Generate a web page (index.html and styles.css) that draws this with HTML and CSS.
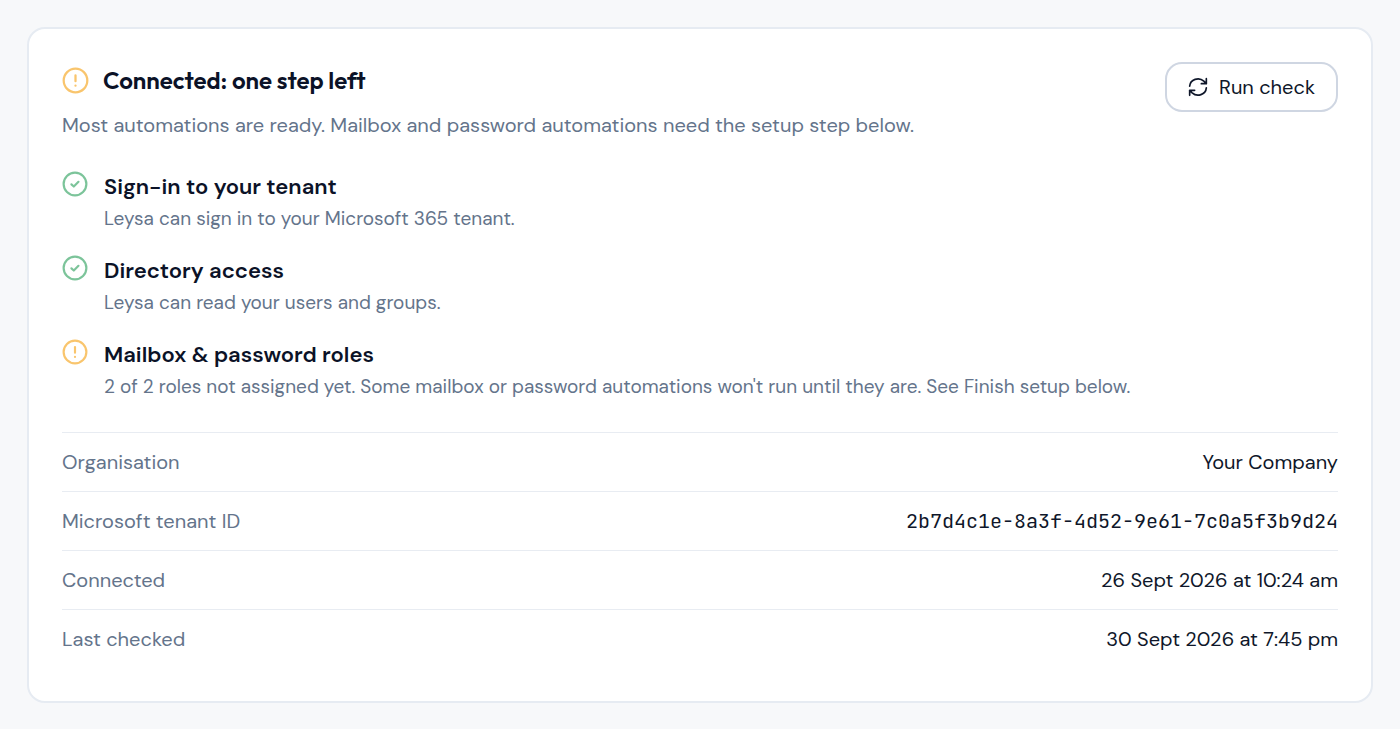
FILE: index.html
```html
<!DOCTYPE html>
<html lang="en">
<head>
<meta charset="utf-8">
<meta name="viewport" content="width=device-width, initial-scale=1">
<title>Connection status</title>
<link rel="stylesheet" href="styles.css">
</head>
<body>
<main class="card">
  <header class="card-header">
    <div class="intro">
      <div class="title-row">
        <svg class="icon icon-title warn" viewBox="0 0 24 24" aria-hidden="true"><circle cx="12" cy="12" r="10.5"/><path d="M12 7.4v5.2M12 16.5v.1"/></svg>
        <h1 class="title">Connected: one step left</h1>
      </div>
      <p class="summary">Most automations are ready. Mailbox and password automations need the setup step below.</p>
    </div>
    <button class="run-button" type="button">
      <svg class="icon icon-button" viewBox="0 0 24 24" aria-hidden="true"><path d="M2 11a10 9.5 0 0 1 17-6l3 3M22 2v6h-6M22 13a10 9.5 0 0 1-17 6l-3-3M2 22v-6h6"/></svg>
      Run check
    </button>
  </header>
  <ul class="checks">
    <li class="check">
      <svg class="icon icon-check ok" viewBox="0 0 24 24" aria-hidden="true"><circle cx="12" cy="12" r="10.5"/><path d="M8.7 12.3l2.2 2 4.3-4.3"/></svg>
      <div>
        <h2 class="check-title">Sign-in to your tenant</h2>
        <p class="check-text">Leysa can sign in to your Microsoft 365 tenant.</p>
      </div>
    </li>
    <li class="check">
      <svg class="icon icon-check ok" viewBox="0 0 24 24" aria-hidden="true"><circle cx="12" cy="12" r="10.5"/><path d="M8.7 12.3l2.2 2 4.3-4.3"/></svg>
      <div>
        <h2 class="check-title">Directory access</h2>
        <p class="check-text">Leysa can read your users and groups.</p>
      </div>
    </li>
    <li class="check">
      <svg class="icon icon-check warn" viewBox="0 0 24 24" aria-hidden="true"><circle cx="12" cy="12" r="10.5"/><path d="M12 7.4v5.2M12 16.5v.1"/></svg>
      <div>
        <h2 class="check-title">Mailbox &amp; password roles</h2>
        <p class="check-text">2 of 2 roles not assigned yet. Some mailbox or password automations won't run until they are. See Finish setup below.</p>
      </div>
    </li>
  </ul>
  <dl class="details">
    <div class="detail"><dt>Organisation</dt><dd>Your Company</dd></div>
    <div class="detail"><dt>Microsoft tenant ID</dt><dd class="mono">2b7d4c1e-8a3f-4d52-9e61-7c0a5f3b9d24</dd></div>
    <div class="detail"><dt>Connected</dt><dd>26 Sept 2026 at 10:24 am</dd></div>
    <div class="detail"><dt>Last checked</dt><dd>30 Sept 2026 at 7:45 pm</dd></div>
  </dl>
</main>
</body>
</html>
```
FILE: styles.css
```css
* { box-sizing: border-box; }
body {
  margin: 0;
  padding: 27px;
  background: #f7f8fa;
  color: #0f172a;
  font-family: "DM Sans", Inter, sans-serif;
  font-size: 20px;
  line-height: 28px;
}
h1, h2, p, ul, dl, dd { margin: 0; padding: 0; }
.card {
  padding: 33px;
  background: #fff;
  border: 2px solid #e6ebf2;
  border-radius: 18px;
}
.card-header {
  display: flex;
  justify-content: space-between;
  align-items: flex-start;
  gap: 24px;
}
.title-row { display: flex; align-items: center; gap: 14px; }
.title {
  font-family: Outfit, Lato, sans-serif;
  font-size: 24px;
  line-height: 36px;
  font-weight: 600;
  color: #0b1227;
}
.summary { margin-top: 13px; color: #64748b; }
.icon {
  flex: none;
  fill: none;
  stroke: currentColor;
  stroke-width: 2;
  stroke-linecap: round;
  stroke-linejoin: round;
}
.icon-title { width: 27px; height: 27px; }
.icon-check { width: 26px; height: 26px; }
.icon-button { width: 20px; height: 20px; }
.warn { color: #f9c56d; }
.ok { color: #7cc49a; }
.run-button {
  display: flex;
  align-items: center;
  gap: 11px;
  padding: 9px 21px;
  border: 2px solid #cfd6e2;
  border-radius: 17px;
  background: #fff;
  color: #0f172a;
  font: inherit;
  white-space: nowrap;
  cursor: pointer;
}
.checks {
  display: grid;
  gap: 21px;
  margin-top: 32px;
  list-style: none;
}
.check { display: flex; gap: 16px; }
.check-title {
  font-size: 22px;
  line-height: 32px;
  font-weight: 600;
  color: #0b1227;
}
.check-text { font-size: 19px; line-height: 31px; color: #64748b; }
.details { margin-top: 30px; }
.detail {
  display: flex;
  justify-content: space-between;
  gap: 24px;
  padding: 15px 0;
  border-top: 1px solid #e8ecf2;
}
.detail dt { color: #64748b; }
.mono { font-family: "JetBrains Mono", "DejaVu Sans Mono", monospace; }
```
